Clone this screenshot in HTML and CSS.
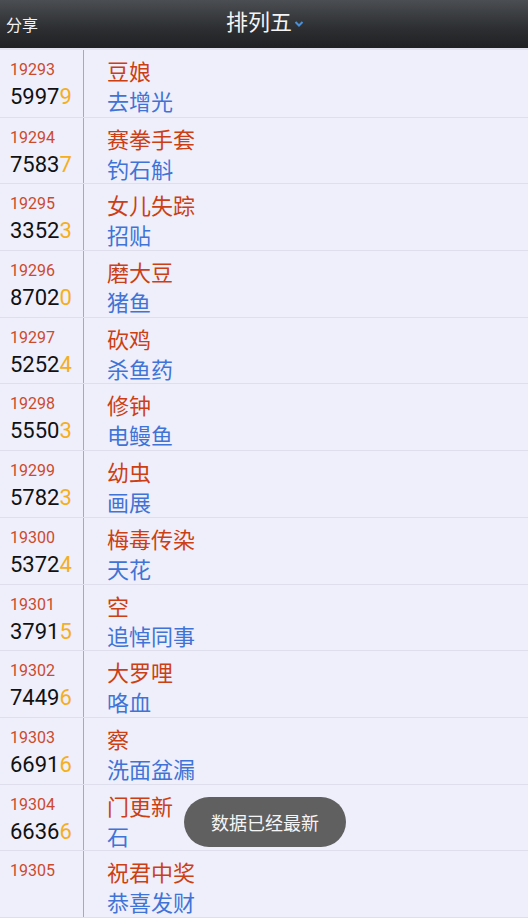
FILE: index.html
```html
<html>
  <head>
    <meta charset="utf-8" />
    <link rel="stylesheet" href="styles.css">
  </head>
  <body>
    <div class="topbar">
      <span class="share">分享</span>
      <span class="title">排列五<svg class="arrow" width="10" height="8" viewBox="0 0 10 8"><path d="M1.5 2 L5 5.5 L8.5 2" fill="none" stroke="#4a90d9" stroke-width="2"/></svg></span>
    </div>
    <div class="list">
      <div class="row"><div class="left"><div class="issue">19293</div><div class="num">5997<b>9</b></div></div><div class="right"><div class="red">豆娘</div><div class="blue">去增光</div></div></div>
      <div class="row"><div class="left"><div class="issue">19294</div><div class="num">7583<b>7</b></div></div><div class="right"><div class="red">赛拳手套</div><div class="blue">钓石斛</div></div></div>
      <div class="row"><div class="left"><div class="issue">19295</div><div class="num">3352<b>3</b></div></div><div class="right"><div class="red">女儿失踪</div><div class="blue">招贴</div></div></div>
      <div class="row"><div class="left"><div class="issue">19296</div><div class="num">8702<b>0</b></div></div><div class="right"><div class="red">磨大豆</div><div class="blue">猪鱼</div></div></div>
      <div class="row"><div class="left"><div class="issue">19297</div><div class="num">5252<b>4</b></div></div><div class="right"><div class="red">砍鸡</div><div class="blue">杀鱼药</div></div></div>
      <div class="row"><div class="left"><div class="issue">19298</div><div class="num">5550<b>3</b></div></div><div class="right"><div class="red">修钟</div><div class="blue">电鳗鱼</div></div></div>
      <div class="row"><div class="left"><div class="issue">19299</div><div class="num">5782<b>3</b></div></div><div class="right"><div class="red">幼虫</div><div class="blue">画展</div></div></div>
      <div class="row"><div class="left"><div class="issue">19300</div><div class="num">5372<b>4</b></div></div><div class="right"><div class="red">梅毒传染</div><div class="blue">天花</div></div></div>
      <div class="row"><div class="left"><div class="issue">19301</div><div class="num">3791<b>5</b></div></div><div class="right"><div class="red">空</div><div class="blue">追悼同事</div></div></div>
      <div class="row"><div class="left"><div class="issue">19302</div><div class="num">7449<b>6</b></div></div><div class="right"><div class="red">大罗哩</div><div class="blue">咯血</div></div></div>
      <div class="row"><div class="left"><div class="issue">19303</div><div class="num">6691<b>6</b></div></div><div class="right"><div class="red">察</div><div class="blue">洗面盆漏</div></div></div>
      <div class="row"><div class="left"><div class="issue">19304</div><div class="num">6636<b>6</b></div></div><div class="right"><div class="red">门更新</div><div class="blue">石</div></div></div>
      <div class="row"><div class="left"><div class="issue">19305</div><div class="num"></div></div><div class="right"><div class="red">祝君中奖</div><div class="blue">恭喜发财</div></div></div>
    </div>
    <div class="toast">数据已经最新</div>
  </body>
</html>
```

FILE: styles.css
```css
body {
  margin: 0;
  width: 528px;
  height: 918px;
  overflow: hidden;
  background-color: #efeffc;
  font-family: "Roboto", "Noto Sans CJK SC", sans-serif;
  position: relative;
}
.topbar {
  height: 48px;
  background: linear-gradient(#4b4e52, #2c2e31 60%, #1f2123);
  border-bottom: 2px solid #e2e2ee;
  display: flex;
  align-items: center;
  position: relative;
}
.share {
  color: #f2f2f2;
  font-size: 16px;
  margin-left: 6px;
}
.title {
  position: absolute;
  left: 226px;
  top: 8px;
  color: #f4f4f4;
  font-size: 22px;
  line-height: 30px;
}
.arrow {
  margin-left: 2px;
  vertical-align: 2px;
}
.row {
  display: flex;
  height: 66.7px;
  border-bottom: 1px solid #dedeec;
  box-sizing: border-box;
}
.row:first-child {
  height: 67.7px;
}
.left {
  width: 84px;
  border-right: 1px solid #a9a9b6;
  padding-left: 10px;
  box-sizing: border-box;
}
.issue {
  color: #cc4a2c;
  font-size: 16px;
  line-height: 20px;
  padding-top: 10px;
}
.num {
  color: #111;
  font-size: 22px;
  line-height: 34px;
}
.num b {
  font-weight: normal;
  color: #f5ae22;
}
.right {
  padding-left: 23px;
  padding-top: 8px;
  font-size: 22px;
  line-height: 30px;
}
.red {
  color: #cc3f14;
}
.blue {
  color: #3f74d6;
}
.toast {
  position: absolute;
  left: 184px;
  top: 797px;
  width: 162px;
  height: 50px;
  border-radius: 25px;
  background-color: #606060;
  color: #f5f5f5;
  font-size: 18px;
  display: flex;
  align-items: center;
  justify-content: center;
  font-family: "Noto Sans CJK SC", sans-serif;
}
```
